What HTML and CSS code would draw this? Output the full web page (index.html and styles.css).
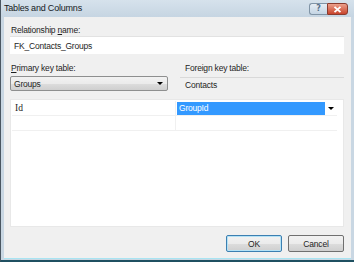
FILE: index.html
```html
<!DOCTYPE html>
<html lang="en">

<head>
    <meta charset="UTF-8">
    <title>Tables and Columns</title>
    <link rel="stylesheet" href="styles.css">
</head>

<body>
    <div class="window">
        <div class="titlebar">
            <span class="title">Tables and Columns</span>
            <div class="caption-buttons">
                <span class="cap-btn help">?</span>
                <span class="cap-btn close">
                    <svg width="9" height="7" viewBox="0 0 9 7">
                        <path d="M1.5 0.8 L7.5 6.2 M7.5 0.8 L1.5 6.2" stroke="#fff" stroke-width="1.8" />
                    </svg>
                </span>
            </div>
        </div>
        <div class="content">
            <label class="label">Relationship <u>n</u>ame:</label>
            <div class="textbox">FK_Contacts_Groups</div>

            <div class="keys">
                <div class="key-col">
                    <label class="label"><u>P</u>rimary key table:</label>
                    <div class="combo">
                        <span>Groups</span>
                        <span class="arrow"></span>
                    </div>
                </div>
                <div class="key-col">
                    <label class="label">Foreign key table:</label>
                    <div class="readonly">Contacts</div>
                </div>
            </div>

            <div class="grid">
                <div class="row">
                    <div class="cell">Id</div>
                    <div class="cell edit">
                        <span class="selected">GroupId</span>
                        <span class="arrow"></span>
                    </div>
                </div>
                <div class="row">
                    <div class="cell"></div>
                    <div class="cell"></div>
                </div>
            </div>

            <div class="buttons">
                <button class="btn default">OK</button>
                <button class="btn">Cancel</button>
            </div>
        </div>
    </div>
</body>

</html>
```

FILE: styles.css
```css
body {
    margin: 0;
    padding: 0;
    font-family: 'Liberation Sans', Arial, sans-serif;
    font-size: 8.5px;
    letter-spacing: -0.2px;
    color: #1e1e1e;
}

.window {
    width: 354px;
    height: 262px;
    box-sizing: border-box;
    background: #c9d7e3;
    border-left: 1px solid #4a5661;
    border-bottom: 2px solid #1f5061;
    display: flex;
    flex-direction: column;
}

.titlebar {
    flex: 0 0 17px;
    display: flex;
    justify-content: space-between;
    align-items: flex-start;
    background: linear-gradient(#d6e2ec, #c6d5e2);
}

.title {
    padding: 2px 0 0 3px;
    font-size: 9px;
    line-height: 13px;
    color: #15191d;
}

.caption-buttons {
    display: flex;
    margin: 3px 6px 0 0;
}

.cap-btn {
    height: 10px;
    display: flex;
    align-items: center;
    justify-content: center;
    border: 1px solid #8094a6;
    font-family: 'DejaVu Sans', sans-serif;
    font-size: 8px;
    font-weight: bold;
    line-height: 1;
}

.help {
    width: 17px;
    background: linear-gradient(#e6eef5, #c4d5e4);
    color: #56708a;
    border-radius: 3px 0 0 3px;
    border-right: none;
}

.close {
    width: 19px;
    background: linear-gradient(#eba08c, #c8442c);
    border-color: #8a3b2e;
    border-radius: 0 3px 3px 0;
}

.content {
    flex: 1;
    margin: 0 3px 1px 3px;
    background: #f0f0f0;
    padding: 7px 7px 0 6px;
    display: flex;
    flex-direction: column;
    border-bottom: 1px solid #a8e4f2;
}

.label {
    display: block;
    height: 12px;
    line-height: 12px;
    padding-left: 1px;
}

.textbox {
    height: 18px;
    line-height: 18px;
    padding-left: 4px;
    box-sizing: border-box;
    background: #fff;
    border-top: 1px solid #e2e2e2;
}

.keys {
    display: flex;
    margin-top: 8px;
}

.key-col {
    display: flex;
    flex-direction: column;
}

.key-col:first-child {
    width: 158px;
}

.key-col:last-child {
    flex: 1;
    margin-left: 12px;
}

.key-col:last-child .label {
    padding-left: 5px;
}

.combo {
    margin-top: 2px;
    height: 15px;
    box-sizing: border-box;
    display: flex;
    align-items: center;
    justify-content: space-between;
    padding: 0 4px 0 3px;
    border: 1px solid #8e8f8f;
    border-radius: 2px;
    background: linear-gradient(#f2f2f2 0%, #ebebeb 50%, #dddddd 51%, #cfcfcf 100%);
}

.arrow {
    width: 0;
    height: 0;
    border-left: 3px solid transparent;
    border-right: 3px solid transparent;
    border-top: 3px solid #000;
}

.readonly {
    margin-top: 3px;
    height: 14px;
    line-height: 14px;
    padding-left: 5px;
    border-top: 1px solid #d9d9d9;
}

.grid {
    margin-top: 7px;
    flex: 0 0 128px;
    box-sizing: border-box;
    background: #fff;
    border: 1px solid #e8e8e8;
    padding: 1px 6px 0 1px;
}

.row {
    display: flex;
    height: 14px;
    border-bottom: 1px solid #f0f0f0;
}

.cell {
    display: flex;
    align-items: center;
    box-sizing: border-box;
}

.cell:first-child {
    width: 164px;
    padding-left: 3px;
    border-right: 1px solid #f0f0f0;
    font-family: 'Liberation Serif', serif;
    font-size: 9.5px;
    letter-spacing: 0;
}

.cell.edit {
    flex: 1;
    justify-content: space-between;
    padding: 0 3px 0 1px;
}

.selected {
    flex: 0 0 148px;
    height: 13px;
    line-height: 13px;
    padding-left: 2px;
    box-sizing: border-box;
    background: #3399ff;
    color: #fff;
}

.buttons {
    display: flex;
    justify-content: flex-end;
    gap: 6px;
    margin-top: 8px;
}

.btn {
    width: 56px;
    height: 17px;
    padding: 0;
    font-family: inherit;
    font-size: 8.5px;
    letter-spacing: -0.2px;
    color: #1e1e1e;
    border: 1px solid #707070;
    border-radius: 2px;
    background: linear-gradient(#f2f2f2 0%, #ebebeb 50%, #dddddd 51%, #cfcfcf 100%);
}

.btn.default {
    border-color: #3c7fb1;
    box-shadow: inset 0 0 0 1px #b4e2f6;
}
```
